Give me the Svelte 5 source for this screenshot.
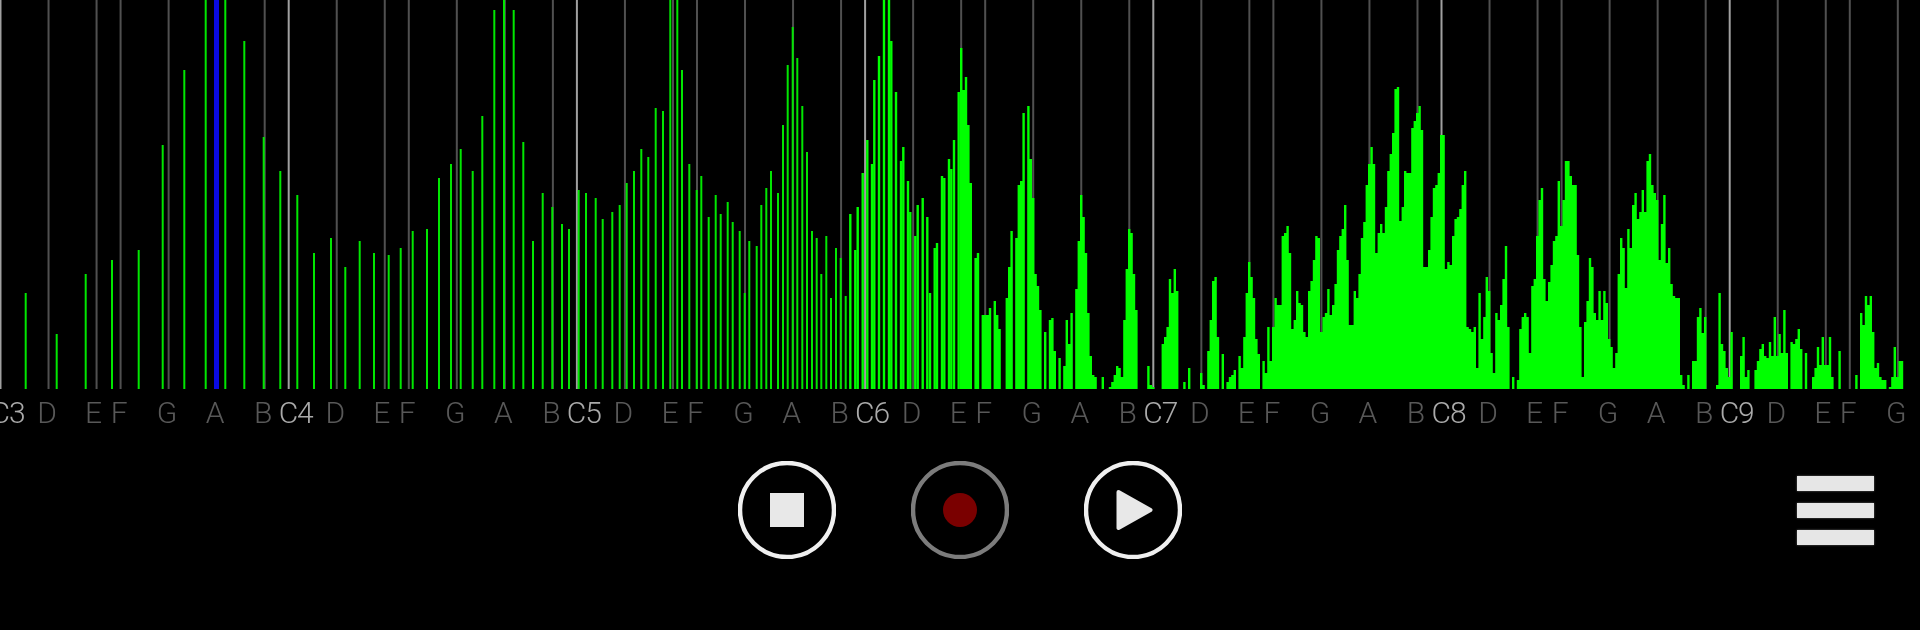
<script>
  const baseline = 389;
  const octave = 288.2;

  // grid: one line per natural note, C3 sits at the left edge
  const steps = [['', 0], ['D', 2], ['E', 4], ['F', 5], ['G', 7], ['A', 9], ['B', 11]];
  const notes = [];
  for (let oct = 0; oct < 7; oct++) {
    for (const [name, semi] of steps) {
      const x = 0.5 + oct * octave + (semi * octave) / 12;
      const nudge = name === '' ? 7 : name === 'E' ? -3 : -1.5;
      if (x < 1900) notes.push({ x, labelX: x + nudge, isC: name === '', label: name || 'C' + (oct + 3) });
    }
  }

  // low bins, still separate: [centre x, top]
  const lowBins = [
    [25.7,293],[56.7,334],[85.7,274],[112,260],[138.7,250],[162.7,145],[184.3,70],[205.7,0],[225.3,0],[244.3,41],
    [263.7,137],[280.3,171],[297.3,195],[314,253],[331,238],[345.3,267],[359.7,241],[374,253],[388.7,255],[400.7,248],
    [412.7,231],[427,229],[439,178],[451,164],[460.7,149],[472.7,171],[482.3,116],[494.3,10],[504,0],[513.7,10],
    [523.3,142],[533,241],[542.7,193],[552.3,207],[562,224],[569,229],[578.7,190],[586,193],[595.7,198],[602.7,219],
    [612.3,212],[619.7,205],[626.7,183],[634,171],[641.3,149],[648.3,157],[655.7,108],[663,111],[670.3,0],[677.3,0],
    [682,70],[689.3,164],[696.7,190],[701.3,176],[708.7,217],[715.7,195],[720.7,214],[727.7,202],[732.7,222],[739.7,231],
    [744.7,293],[749.3,241],[756.7,246],[761.3,205],[766.3,188],[771,171],[778,193],[783,125],[787.7,65],[792.7,27],
    [797.3,58],[802.3,106],[807,152],[812,231],[816.7,238],[821.3,274],[826.3,236],[831,298],[836,248],[840.7,258],
    [845.7,296],[850.3,214],[855.3,250],[857.7,207],[862.7,173],[867.3,140],[872,164],[874.3,80],[879,56],[884,0],
    [889,0],[891.3,41],[896,92],[901,161],[903.3,147],[908,181],[910.3,212],[915.3,236],[917.7,205],[922.7,198],
    [927.3,217],[930,293],[934.7,248],[937,243],[942,176],[944.3,178],[949,159],[951.3,169],[954,140],[958.7,92]
  ];

  // upper range: one column every 2.4px from x=960, 389 means empty
  const columns = [
    48,90,77,125,183,389,258,253,389,315,315,315,308,389,301,315,329,389,389,298,
    267,231,389,238,185,181,113,389,106,159,198,274,286,310,389,332,389,320,318,351,
    389,358,389,366,320,344,313,389,289,241,195,217,253,313,356,375,377,389,389,377,
    389,389,387,382,375,366,368,377,320,269,229,233,274,310,389,389,389,389,366,385,
    387,389,389,389,344,337,327,279,293,269,291,389,389,382,389,368,389,389,389,389,
    373,385,389,351,320,281,277,337,389,354,389,382,377,375,370,389,356,368,337,293,
    262,277,298,339,354,389,361,373,327,361,327,298,305,305,236,233,226,253,329,320,
    291,303,305,332,337,291,281,260,236,238,332,317,313,289,315,305,284,250,236,229,
    205,260,325,325,291,298,274,238,222,185,164,147,164,253,233,224,233,207,171,154,
    133,89,87,221,207,171,173,173,128,121,113,106,130,267,267,250,217,188,185,173,
    135,135,269,262,265,236,219,217,209,185,171,327,329,332,327,368,293,339,317,277,
    291,353,373,313,320,305,279,246,327,389,377,389,380,329,317,313,317,353,286,279,
    236,200,188,279,301,282,265,241,236,181,226,200,161,161,176,185,185,255,327,377,
    322,301,258,267,313,320,291,320,291,303,339,347,368,353,274,238,248,288,229,248,
    205,193,219,212,190,212,161,154,185,193,200,260,224,195,263,248,284,296,298,298,
    375,385,389,375,389,361,361,317,308,333,317,389,389,389,389,385,293,344,351,368,
    377,332,389,389,389,356,337,377,370,389,389,370,361,349,344,356,358,342,356,317,
    356,334,353,310,353,389,342,344,339,329,349,389,353,389,389,377,368,347,365,337,
    365,365,337,377,389,389,351,389,389,389,389,389,389,375,389,313,325,296,305,296,
    332,368,363,377,380,380,389,387,377,347,377,361,361
  ];

  // drawn as one stepped outline so neighbouring columns don't leave seams
  const envelope =
    `M960 ${baseline}` +
    columns.map((top, i) => `V${top}H${(960 + (i + 1) * 2.4).toFixed(1)}`).join('') +
    `V${baseline}Z`;
</script>

<main class="page">
  <svg class="spectrum" width="1920" height="440" viewBox="0 0 1920 440">
    {#each notes as note}
      <rect class={note.isC ? 'line c' : 'line'} x={note.x - 1} y="0" width="2" height={baseline} />
      <text class={note.isC ? 'note c' : 'note'} x={note.labelX} y="423">{note.label}</text>
    {/each}

    {#each lowBins as [x, top]}
      <rect
        class={x > 850 ? 'bin' : 'bin thin'}
        x={x - (x > 850 ? 1.2 : 1)}
        y={top}
        width={x > 850 ? 2.4 : 2}
        height={baseline - top}
      />
    {/each}

    <path class="bin" d={envelope} />

    <!-- tuner marker -->
    <rect class="marker" x="214" y="0" width="5" height={baseline} />
  </svg>

  <div class="controls">
    <div class="transport">
      <button class="round" aria-label="Stop">
        <svg width="98" height="98" viewBox="0 0 98 98">
          <circle class="ring" cx="49" cy="49" r="47" />
          <rect class="glyph" x="32" y="32" width="34" height="34" />
        </svg>
      </button>
      <button class="round" aria-label="Record">
        <svg width="98" height="98" viewBox="0 0 98 98">
          <circle class="ring off" cx="49" cy="49" r="47" />
          <circle class="dot" cx="49" cy="49" r="17" />
        </svg>
      </button>
      <button class="round" aria-label="Play">
        <svg width="98" height="98" viewBox="0 0 98 98">
          <circle class="ring" cx="49" cy="49" r="47" />
          <path class="glyph tri" d="M34.5 31 L66.5 49 L34.5 67 Z" />
        </svg>
      </button>
    </div>
    <button class="menu" aria-label="Menu">
      <span></span>
      <span></span>
      <span></span>
    </button>
  </div>
</main>

<style>
  :global(body) {
    margin: 0;
    background: #000;
  }

  .page {
    width: 1920px;
    height: 630px;
    background: #000;
    overflow: hidden;
  }

  .spectrum {
    display: block;
    filter: blur(0.4px);
  }

  .line {
    fill: #505050;
  }

  .line.c {
    fill: #a0a0a0;
  }

  .bin {
    fill: #00ff00;
  }

  .bin.thin {
    fill: #00e600;
  }

  .marker {
    fill: #0a0ae0;
  }

  .note {
    font-family: "Roboto", "Liberation Sans", sans-serif;
    font-weight: 300;
    font-size: 30px;
    text-anchor: middle;
    fill: #585858;
  }

  .note.c {
    fill: #aaa;
    letter-spacing: -1px;
  }

  .controls {
    display: grid;
    grid-template-columns: 1fr auto 1fr;
    align-items: start;
    padding-top: 20px;
  }

  .transport {
    grid-column: 2;
    display: flex;
    gap: 75px;
    margin-top: 0.5px;
    filter: blur(0.5px);
  }

  button {
    padding: 0;
    border: 0;
    background: none;
  }

  .round {
    width: 98px;
    height: 98px;
  }

  .round svg {
    display: block;
  }

  .ring {
    fill: none;
    stroke: #f0f0f0;
    stroke-width: 4.5;
  }

  .ring.off {
    stroke: #7c7c7c;
  }

  .glyph {
    fill: #e8e8e8;
  }

  .tri {
    stroke: #e8e8e8;
    stroke-width: 4;
    stroke-linejoin: round;
  }

  .dot {
    fill: #7a0000;
  }

  .menu {
    grid-column: 3;
    justify-self: end;
    display: flex;
    flex-direction: column;
    gap: 12px;
    margin: 16px 46px 0 0;
  }

  .menu span {
    display: block;
    width: 77px;
    height: 15px;
    background: #e6e6e6;
    box-shadow: 0 0 2px #666;
  }
</style>
